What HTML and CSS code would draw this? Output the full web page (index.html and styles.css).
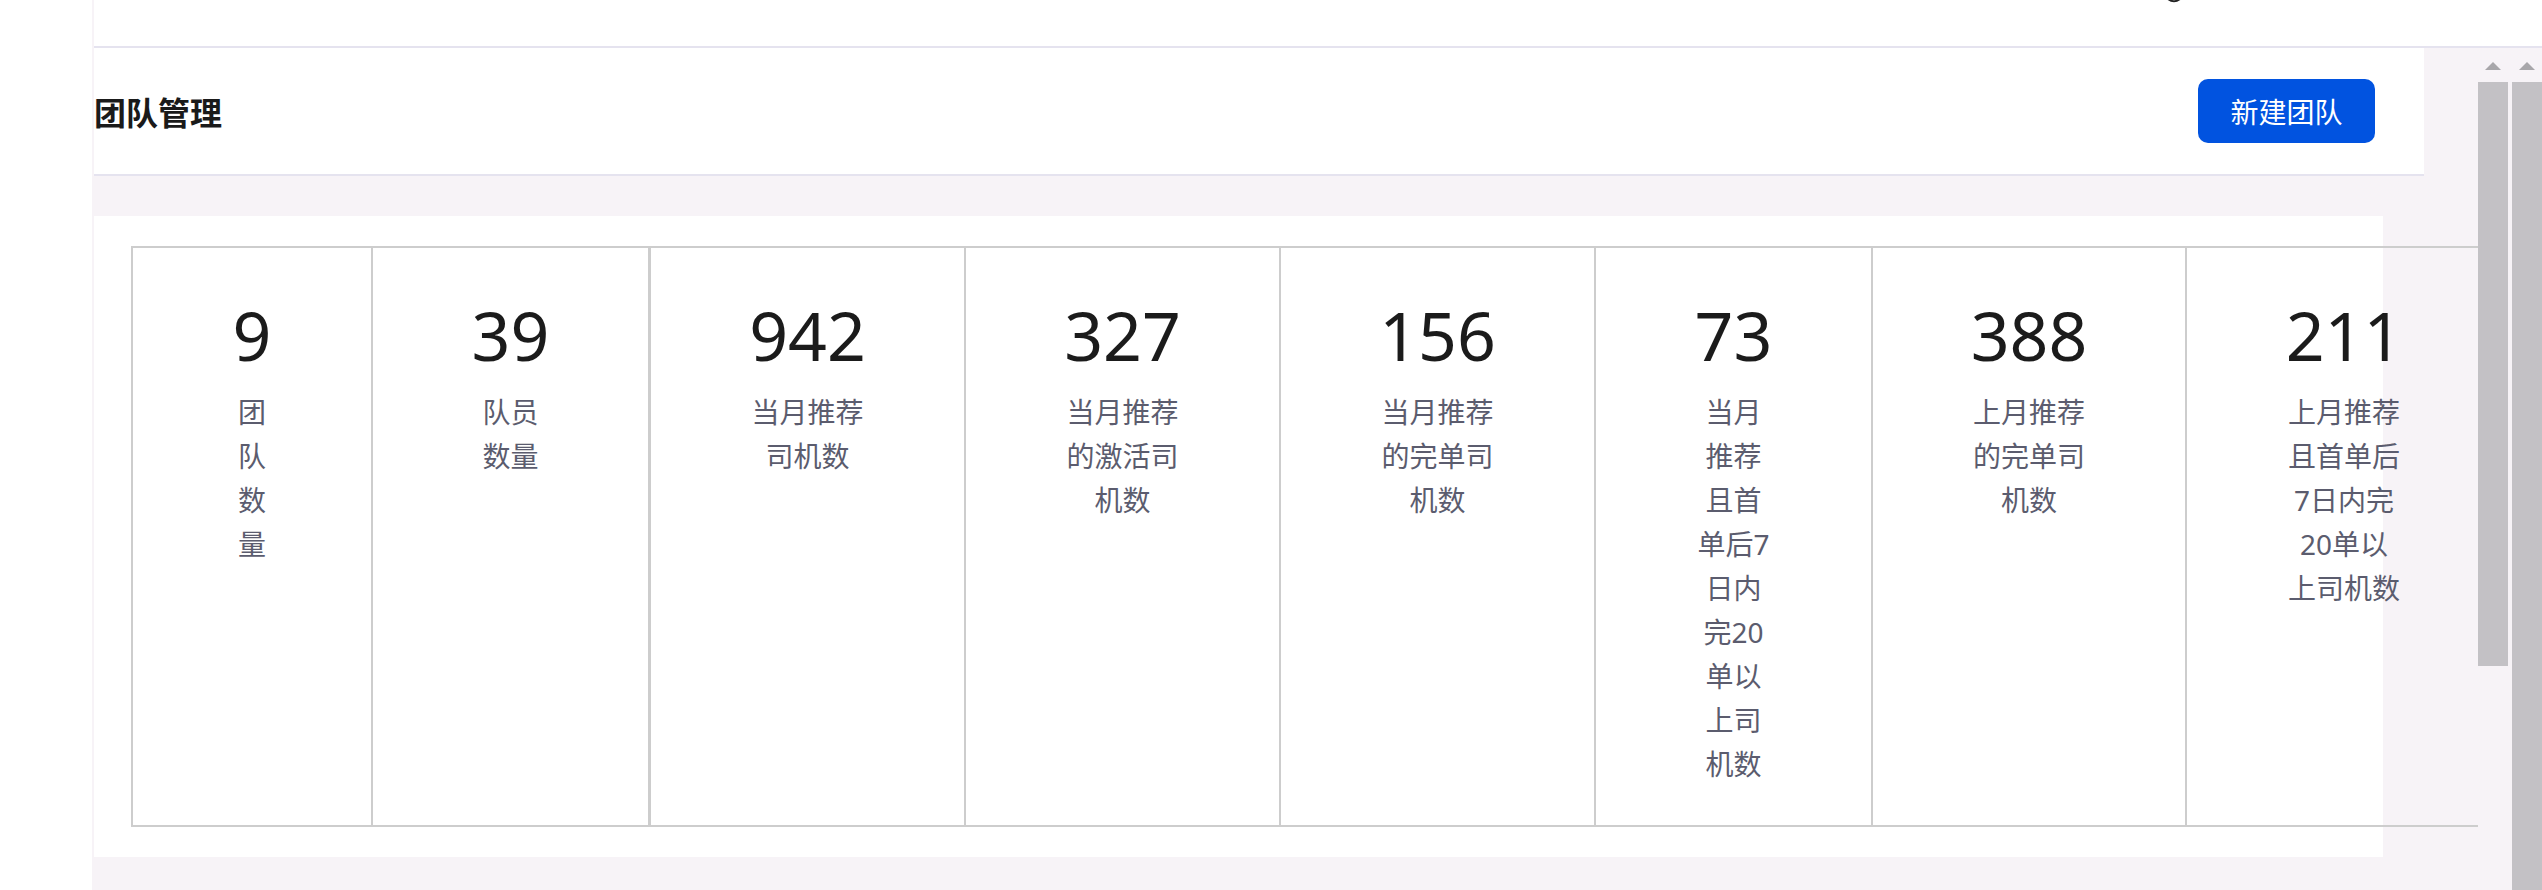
FILE: index.html
```html
<!DOCTYPE html>
<html lang="zh-CN">
<head>
<meta charset="utf-8">
<title>团队管理</title>
<link rel="stylesheet" href="styles.css">
</head>
<body>
<div class="app">
  <aside class="sidebar"></aside>
  <div class="main">
    <header class="topbar">
      <span class="topbar-mark"><svg width="14" height="4" viewBox="0 0 14 4"><path d="M1 0 Q7 4.5 13 0" fill="none" stroke="#222" stroke-width="2"/></svg></span>
    </header>
    <div class="body-row">
      <div class="content">
        <section class="page-head">
          <h1 class="page-title">团队管理</h1>
          <button class="btn-primary" type="button">新建团队</button>
        </section>
        <section class="stats-card">
          <div class="stats-table">
            <div class="stat w240"><span class="stat-value">9</span><div class="stat-label">团<br>队<br>数<br>量</div></div>
            <div class="stat w277 group-end"><span class="stat-value">39</span><div class="stat-label">队员<br>数量</div></div>
            <div class="stat w316"><span class="stat-value">942</span><div class="stat-label">当月推荐<br>司机数</div></div>
            <div class="stat w315"><span class="stat-value">327</span><div class="stat-label">当月推荐<br>的激活司<br>机数</div></div>
            <div class="stat w315"><span class="stat-value">156</span><div class="stat-label">当月推荐<br>的完单司<br>机数</div></div>
            <div class="stat w277"><span class="stat-value">73</span><div class="stat-label">当月<br>推荐<br>且首<br>单后7<br>日内<br>完20<br>单以<br>上司<br>机数</div></div>
            <div class="stat w314"><span class="stat-value">388</span><div class="stat-label">上月推荐<br>的完单司<br>机数</div></div>
            <div class="stat w316"><span class="stat-value">211</span><div class="stat-label">上月推荐<br>且首单后<br>7日内完<br>20单以<br>上司机数</div></div>
          </div>
        </section>
      </div>
      <div class="scrollbar sb-inner"><div class="sb-arrow"></div><div class="sb-thumb"></div></div>
      <div class="scrollbar sb-outer"><div class="sb-arrow"></div><div class="sb-thumb"></div></div>
    </div>
  </div>
</div>
</body>
</html>
```
FILE: styles.css
```css
* { box-sizing: border-box; }
html, body { margin: 0; padding: 0; }
body {
  width: 2542px;
  height: 890px;
  overflow: hidden;
  background: #ffffff;
  font-family: "Noto Sans", "Noto Sans CJK SC", sans-serif;
}
.app { display: flex; width: 2542px; height: 890px; }
.sidebar { width: 92px; flex: none; background: #ffffff; }
.main {
  flex: 1;
  min-width: 0;
  display: flex;
  flex-direction: column;
  background: #f7f3f7;
  padding-left: 2px;
}
.topbar {
  flex: none;
  height: 48px;
  background: #ffffff;
  border-bottom: 2px solid #e5e3ef;
  display: flex;
  justify-content: flex-end;
  align-items: flex-start;
}
.topbar-mark { display: block; width: 14px; height: 4px; margin-right: 361px; margin-top: -1px; }
.topbar-mark svg { display: block; }
.body-row { flex: 1; min-height: 0; display: flex; }
.content { flex: 1; min-width: 0; overflow: hidden; }
.page-head {
  height: 128px;
  margin-right: 54px;
  padding-right: 49px;
  background: #ffffff;
  border-bottom: 2px solid #e5e3ef;
  display: flex;
  align-items: center;
  justify-content: space-between;
}
.page-title {
  margin: 0;
  font-family: "Noto Sans CJK SC", sans-serif;
  font-size: 32px;
  font-weight: 700;
  color: #1a1a1a;
  line-height: 1.2;
}
.btn-primary {
  width: 177px;
  height: 64px;
  border: none;
  border-radius: 10px;
  background: #0153e0;
  color: #ffffff;
  font-family: "Noto Sans CJK SC", sans-serif;
  font-size: 28px;
  padding: 0;
}
.stats-card {
  margin-top: 40px;
  margin-right: 95px;
  background: #ffffff;
  padding: 30px 0 30px 37px;
}
.stats-table {
  display: flex;
  width: max-content;
  border-top: 2px solid #cdcdcd;
  border-bottom: 2px solid #cdcdcd;
}
.stat {
  flex: none;
  border-left: 2px solid #cdcdcd;
  text-align: center;
  padding: 53px 0 39px;
}
.stat.group-end + .stat { border-left-width: 3px; }
.w240 { width: 240px; }
.w277 { width: 277px; }
.w314 { width: 314px; }
.w315 { width: 315px; }
.w316 { width: 316px; }
.stat-value {
  display: block;
  font-family: "Noto Sans", sans-serif;
  font-size: 68px;
  line-height: 68px;
  color: #1b1b1b;
}
.stat-label {
  margin-top: 21px;
  font-family: "Noto Sans", "Noto Sans CJK SC", sans-serif;
  font-size: 28px;
  line-height: 44px;
  color: #5b5c6e;
  white-space: nowrap;
}
.scrollbar {
  flex: none;
  width: 30px;
  display: flex;
  flex-direction: column;
  align-items: center;
}
.sb-inner { margin-right: 4px; }
.sb-arrow {
  width: 0;
  height: 0;
  margin-top: 14px;
  border-left: 8px solid transparent;
  border-right: 8px solid transparent;
  border-bottom: 8px solid #a8a6aa;
}
.sb-thumb {
  width: 30px;
  margin-top: 12px;
  background: #c3c1c5;
}
.sb-inner .sb-thumb { height: 584px; }
.sb-outer .sb-thumb { flex: 1; }
```
